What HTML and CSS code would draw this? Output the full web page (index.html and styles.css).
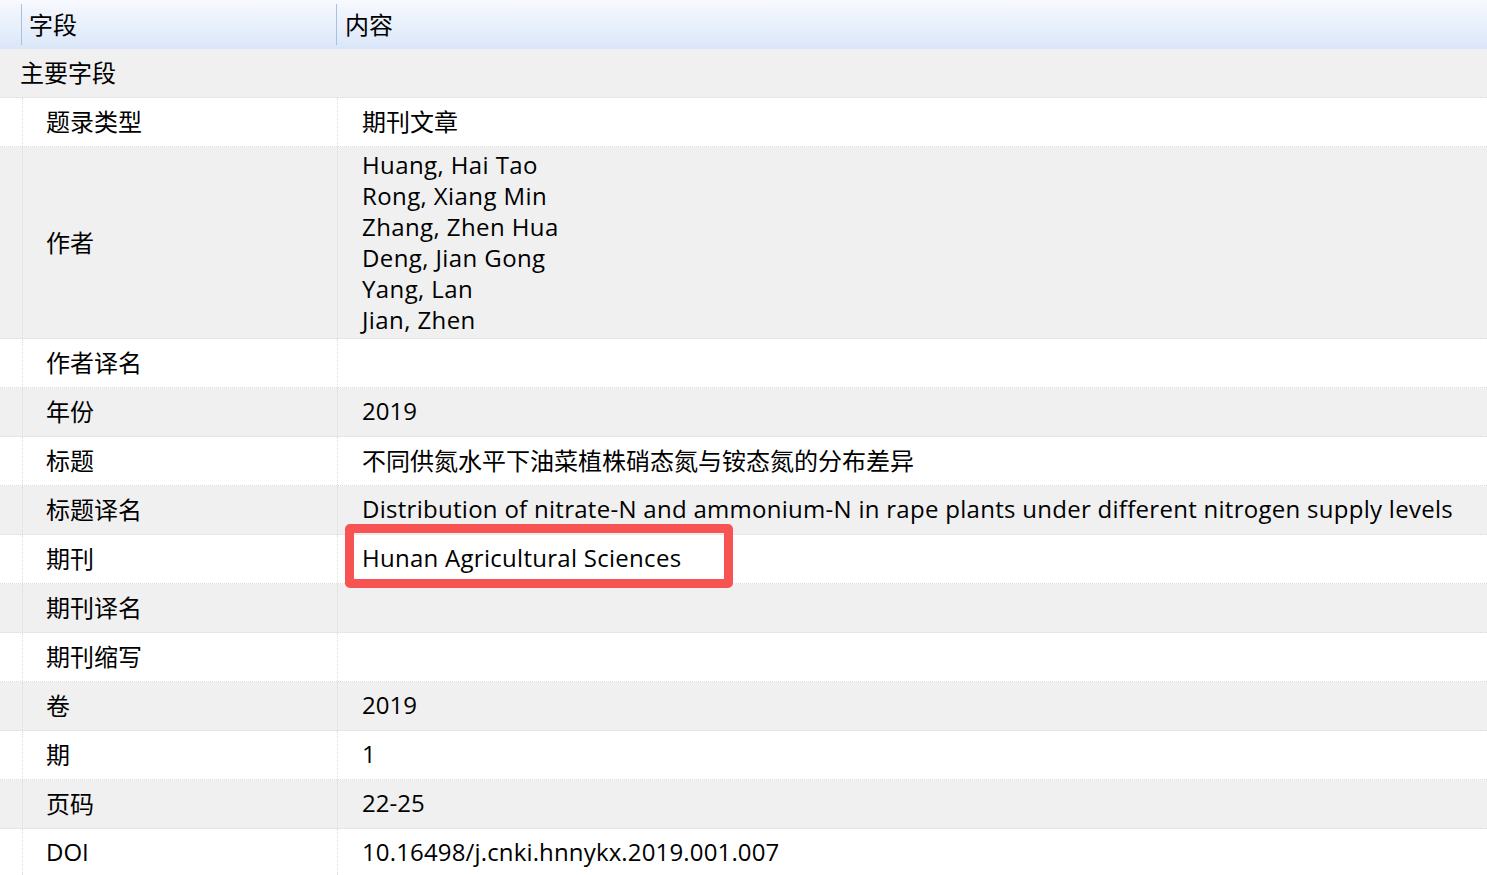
FILE: index.html
```html
<!DOCTYPE html>
<html lang="zh">
<head>
<meta charset="utf-8">
<title>题录</title>
<link rel="stylesheet" href="styles.css">
</head>
<body>
<div class="table">
  <div class="head">
    <div class="hcell first"></div>
    <div class="hcell"><span class="sep"></span><span class="htext">字段</span></div>
    <div class="hcell"><span class="sep"></span><span class="htext">内容</span></div>
  </div>
  <div class="section">主要字段</div>

  <div class="row">
    <div class="indent"></div><div class="label">题录类型</div><div class="value">期刊文章</div>
  </div>
  <div class="row alt">
    <div class="indent"></div><div class="label">作者</div>
    <div class="value multi en">
      <span>Huang, Hai Tao</span>
      <span>Rong, Xiang Min</span>
      <span>Zhang, Zhen Hua</span>
      <span>Deng, Jian Gong</span>
      <span>Yang, Lan</span>
      <span>Jian, Zhen</span>
    </div>
  </div>
  <div class="row">
    <div class="indent"></div><div class="label">作者译名</div><div class="value"></div>
  </div>
  <div class="row alt">
    <div class="indent"></div><div class="label">年份</div><div class="value">2019</div>
  </div>
  <div class="row">
    <div class="indent"></div><div class="label">标题</div><div class="value">不同供氮水平下油菜植株硝态氮与铵态氮的分布差异</div>
  </div>
  <div class="row alt">
    <div class="indent"></div><div class="label">标题译名</div><div class="value en">Distribution of nitrate-N and ammonium-N in rape plants under different nitrogen supply levels</div>
  </div>
  <div class="row">
    <div class="indent"></div><div class="label">期刊</div><div class="value en highlight-host">Hunan Agricultural Sciences<span class="highlight"></span></div>
  </div>
  <div class="row alt">
    <div class="indent"></div><div class="label">期刊译名</div><div class="value"></div>
  </div>
  <div class="row">
    <div class="indent"></div><div class="label">期刊缩写</div><div class="value"></div>
  </div>
  <div class="row alt">
    <div class="indent"></div><div class="label">卷</div><div class="value">2019</div>
  </div>
  <div class="row">
    <div class="indent"></div><div class="label">期</div><div class="value">1</div>
  </div>
  <div class="row alt">
    <div class="indent"></div><div class="label">页码</div><div class="value">22-25</div>
  </div>
  <div class="row">
    <div class="indent"></div><div class="label">DOI</div><div class="value doi">10.16498/j.cnki.hnnykx.2019.001.007</div>
  </div>
</div>
</body>
</html>
```

FILE: styles.css
```css
html, body {
  margin: 0;
  padding: 0;
  background: #ffffff;
}

body {
  font-family: "Open Sans", "Noto Sans CJK SC", sans-serif;
  font-size: 24px;
  color: #000;
  overflow: hidden;
}

.table {
  width: 1487px;
}

.head {
  display: grid;
  grid-template-columns: 21px 315px 1fr;
  height: 49px;
  background: linear-gradient(to bottom, #f7f9fe 0%, #eaf1fc 45%, #dae6f8 100%);
}

.hcell {
  display: flex;
  align-items: center;
}

.sep {
  width: 1px;
  height: 41px;
  background: #a9c0df;
  margin-right: 7px;
}

.hcell + .hcell + .hcell .sep {
  margin-right: 8px;
}

.htext {
  padding-bottom: 2px;
}

.section {
  height: 49px;
  box-sizing: border-box;
  display: flex;
  align-items: center;
  padding-left: 20px;
  padding-bottom: 3px;
  background: #f0f0f0;
  border-bottom: 1px dotted #dcdcdc;
}

.row {
  display: grid;
  grid-template-columns: 22px 315px 1fr;
  min-height: 48px;
  border-bottom: 1px dotted #dcdcdc;
  background: #ffffff;
}

.row.alt {
  background: #f0f0f0;
}

.label,
.value {
  display: flex;
  align-items: center;
  border-left: 1px dotted #dcdcdc;
  padding-bottom: 3px;
}

.label {
  padding-left: 23px;
}

.value {
  padding-left: 24px;
}

.value.en {
  letter-spacing: 0.28px;
}

.value.doi {
  letter-spacing: 0.15px;
}

.value.multi {
  flex-direction: column;
  align-items: flex-start;
  justify-content: center;
  line-height: 31px;
  padding-top: 2px;
  padding-bottom: 3px;
  letter-spacing: 0.4px;
}

.highlight-host {
  position: relative;
}

.highlight {
  position: absolute;
  left: 7px;
  top: -11px;
  width: 388px;
  height: 64px;
  box-sizing: border-box;
  border: 9px solid #f75353;
  border-radius: 5px;
}
```
